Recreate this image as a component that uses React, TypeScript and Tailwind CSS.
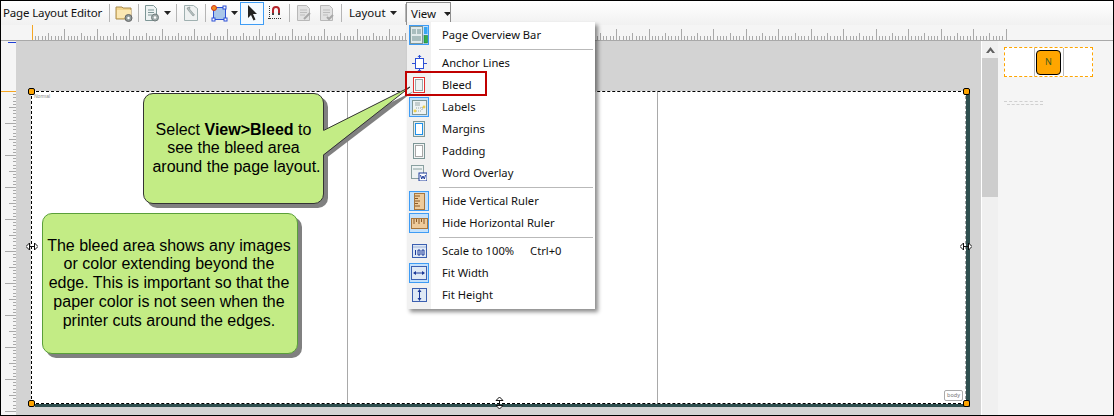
const menuFont = { fontFamily: '"Noto Sans", sans-serif' };

const Sep = ({ ml }: { ml: string }) => <div className={`w-px h-[18px] bg-[#b5b5b5] ${ml}`}></div>;

const Caret = ({ ml }: { ml: string }) => (
  <svg width="7" height="4" className={ml}>
    <path d="M0 0h7L3.5 4z" fill="#222" />
  </svg>
);

const FolderIcon = () => (
  <svg width="18" height="18" viewBox="0 0 18 18">
    <path d="M1 3h6l1 1 8 0v11H1z" fill="#f3d58c" stroke="#a88a4c" />
    <path d="M2 6h14v8H2z" fill="#fbe7b2" />
    <circle cx="13.500" cy="14" r="3.500" fill="#8f9a9a" stroke="#666" />
    <circle cx="13.500" cy="14" r="1.200" fill="#fff" />
  </svg>
);

const DocGearIcon = () => (
  <svg width="16" height="18" viewBox="0 0 16 18">
    <path d="M1.5 1.5h8l3 3v12h-11z" fill="#eef3f3" stroke="#7d9696" />
    <path d="M4 6h6M4 8.500h6M4 11h4" stroke="#7d9696" />
    <circle cx="11" cy="13.500" r="3.500" fill="#a3adad" stroke="#6f7b7b" />
    <circle cx="11" cy="13.500" r="1.200" fill="#fff" />
  </svg>
);

const WrenchDocIcon = () => (
  <svg width="14" height="18" viewBox="0 0 14 18">
    <path d="M.5 1.500h9l4 3v12H.5z" fill="#eef1f1" stroke="#9fb0b0" />
    <path d="M4 6l5 6 1.500-1L5.500 5l.5-2-3 1z" fill="#b5c0c0" stroke="#7f8c8c" strokeWidth=".6" />
  </svg>
);

const ShapeIcon = () => (
  <svg width="17" height="17" viewBox="0 0 17 17">
    <rect x="2.500" y="2.500" width="12" height="12" fill="#a9c6e8" stroke="#2b4fd6" />
    <rect x="12" y="1" width="3" height="3" fill="#fff" stroke="#2b4fd6" />
    <rect x="1" y="13" width="3" height="3" fill="#fff" stroke="#2b4fd6" />
    <rect x="13" y="13" width="3" height="3" fill="#fff" stroke="#2b4fd6" />
    <circle cx="3" cy="3" r="2.500" fill="#f28c1e" stroke="#c9341c" />
  </svg>
);

const ArrowIcon = () => (
  <svg width="10" height="16" viewBox="0 0 10 16">
    <path d="M1 0v13l3-3 2.500 5.500 2-1L6 9h4z" fill="#222" />
  </svg>
);

const MagnetIcon = () => (
  <svg width="14" height="16" viewBox="0 0 14 16">
    <path d="M5 9V5a3 3 0 0 1 6 0v4" fill="none" stroke="#b5242a" strokeWidth="2" />
    <path d="M4 8h2v2H4zM10 8h2v2h-2z" fill="#444" />
    <path d="M0 13.500h14" stroke="#333" strokeDasharray="1 1" />
    <path d="M1.500 1v13" stroke="#333" strokeDasharray="1 1" />
  </svg>
);

const FadedDoc = ({ mark }: { mark: string }) => (
  <svg width="15" height="17" viewBox="0 0 15 17">
    <path d="M.5 .5h9l3 3v12H.5z" fill="#e2e2e2" stroke="#b8b8b8" />
    <path d="M3 5h7M3 7.500h7M3 10h5" stroke="#bdbdbd" />
    <path d={mark} fill="none" stroke="#a8a8a8" strokeWidth="2" />
  </svg>
);

const Checked = ({ children }: { children: React.ReactNode }) => (
  <div className="w-5 h-5 flex items-center justify-center bg-[#c4e1fb] border border-[#3e9cf5]">{children}</div>
);

const icons: Record<string, React.ReactNode> = {
  overview: (
    <Checked>
      <svg width="18" height="18" viewBox="0 0 18 18">
        <rect x=".5" y=".5" width="12" height="17" fill="#e2eaea" stroke="#7d9696" />
        <path d="M2 3h4v5H2zM7 3h4v5H7zM2 10h9v5H2z" fill="#a9bdbd" />
        <rect x="14" y="1" width="3.500" height="7" fill="#36a6f2" />
        <rect x="14" y="9.500" width="3.500" height="7.500" fill="#2fb24a" stroke="#1c6a2d" strokeWidth=".5" />
      </svg>
    </Checked>
  ),
  anchor: (
    <svg width="15" height="17" viewBox="0 0 15 17">
      <rect x="3.500" y="3.500" width="8" height="10" fill="#fff" stroke="#2b4fd6" />
      <path d="M7.500 0v3M7.500 14v3M0 8.500h3M12 8.500h3" stroke="#2b4fd6" />
      <path d="M5.500 2h4L7.500 0zM5.500 15h4l-2 2z" fill="#2b4fd6" />
    </svg>
  ),
  bleed: (
    <svg width="12" height="16" viewBox="0 0 12 16">
      <rect x=".5" y=".5" width="11" height="15" fill="#fff" stroke="#e23030" />
      <rect x="2.500" y="2.500" width="7" height="11" fill="#eef2f2" stroke="#9aa8a8" />
    </svg>
  ),
  labels: (
    <Checked>
      <svg width="15" height="15" viewBox="0 0 15 15">
        <rect x=".5" y=".5" width="14" height="14" fill="#eef3f3" stroke="#7d9696" />
        <path d="M3 3h5M3 5h5" stroke="#9aa8a8" />
        <path d="M2 11h8M10 7v4M4 8h8" stroke="#9aa8a8" strokeDasharray="1 1" />
        <circle cx="3" cy="11" r="1.400" fill="#f0d24a" />
        <circle cx="12" cy="7" r="1.400" fill="#f0d24a" />
      </svg>
    </Checked>
  ),
  margins: (
    <svg width="12" height="16" viewBox="0 0 12 16">
      <rect x=".5" y=".5" width="11" height="15" fill="#e4ecec" stroke="#7d9696" />
      <rect x="2.500" y="2.500" width="7" height="11" fill="#fff" stroke="#1e90e8" />
    </svg>
  ),
  padding: (
    <svg width="12" height="16" viewBox="0 0 12 16">
      <rect x=".5" y=".5" width="11" height="15" fill="#f2f5f5" stroke="#7d9696" />
      <rect x="2.500" y="2.500" width="7" height="11" fill="#fff" stroke="#555" strokeDasharray="1 1" />
    </svg>
  ),
  word: (
    <svg width="16" height="16" viewBox="0 0 16 16">
      <rect x=".5" y=".5" width="12" height="13" fill="#eef3f3" stroke="#8aa0a0" />
      <path d="M2 4h9" stroke="#8aa0a0" />
      <rect x="8" y="8" width="8" height="8" fill="#fff" stroke="#1c3a9a" />
      <path d="M9.500 10l1.200 4 1.300-3 1.300 3 1.200-4" fill="none" stroke="#1c3a9a" />
    </svg>
  ),
  vruler: (
    <Checked>
      <svg width="11" height="17" viewBox="0 0 11 17">
        <rect x=".5" y=".5" width="10" height="16" fill="#eecb9b" stroke="#a8763c" />
        <path d="M1 3h5M1 5.500h3M1 8h5M1 10.500h3M1 13h5" stroke="#8a5a28" />
      </svg>
    </Checked>
  ),
  hruler: (
    <Checked>
      <svg width="17" height="11" viewBox="0 0 17 11">
        <rect x=".5" y=".5" width="16" height="10" fill="#eecb9b" stroke="#a8763c" />
        <path d="M3 1v5M5.500 1v3M8 1v5M10.500 1v3M13 1v5" stroke="#8a5a28" />
      </svg>
    </Checked>
  ),
  scale: (
    <svg width="15" height="14" viewBox="0 0 15 14">
      <rect x=".5" y=".5" width="14" height="13" fill="#dfe9f5" stroke="#3b5fb0" />
      <path d="M1 3h13" stroke="#9fb2d8" />
      <path d="M3.500 6v5M6 6h2v5H6zM10 6h2v5h-2z" fill="none" stroke="#1c3a9a" />
    </svg>
  ),
  fitw: (
    <Checked>
      <svg width="16" height="14" viewBox="0 0 16 14">
        <rect x=".5" y=".5" width="15" height="13" fill="#dfe9f5" stroke="#3b5fb0" />
        <path d="M3 7h10" stroke="#1c3a9a" />
        <path d="M5 5v4L2 7zM11 5v4l3-2z" fill="#1c3a9a" />
      </svg>
    </Checked>
  ),
  fith: (
    <svg width="15" height="14" viewBox="0 0 15 14">
      <rect x=".5" y=".5" width="14" height="13" fill="#dfe9f5" stroke="#3b5fb0" />
      <path d="M7.500 3v8" stroke="#1c3a9a" />
      <path d="M5.500 4h4l-2-3zM5.500 10h4l-2 3z" fill="#1c3a9a" />
    </svg>
  ),
};

const MenuItem = ({ icon, label, shortcut }: { icon: string; label: string; shortcut?: string }) => (
  <div className="flex items-center h-[22px]">
    <div className="w-6 h-[22px] flex items-center justify-center shrink-0">{icons[icon]}</div>
    <span className="ml-[11px] whitespace-pre">{label}</span>
    {shortcut && <span className="ml-[16px]">{shortcut}</span>}
  </div>
);

const MenuSep = () => (
  <div className="h-[6px] flex items-center pl-8 pr-[2px]">
    <div className="w-full h-px bg-[#b9b9b9]"></div>
  </div>
);

const HRuler = () => {
  const ticks = [];
  for (let i = 0; i <= 300; i++) {
    const x = Math.round(31 + i * 3.245) + 0.5;
    if (x > 1113) break;
    const top = i % 10 === 0 ? 4 : i % 5 === 0 ? 8 : 11;
    ticks.push(<line key={i} x1={x} x2={x} y1={top} y2={15} stroke="#a9a9a9" />);
  }
  return (
    <svg width="1112" height="15" className="block">
      {ticks}
      <line x1="31.500" x2="31.500" y1="0" y2="15" stroke="#f5a623" />
    </svg>
  );
};

const VRuler = () => {
  const ticks = [];
  for (let i = 0; i <= 100; i++) {
    const y = Math.round(50 + i * 3.2) + 0.5;
    if (y > 374) break;
    const left = i % 10 === 0 ? 4 : i % 5 === 0 ? 8 : 12;
    ticks.push(<line key={i} y1={y} y2={y} x1={left} x2={15} stroke="#a9a9a9" />);
  }
  return (
    <svg width="15" height="374" className="block">
      {ticks}
      <line x1="7" x2="15" y1="1.500" y2="1.500" stroke="#1e3fd6" />
      <line x1="0" x2="15" y1="50.500" y2="50.500" stroke="#f5a623" />
    </svg>
  );
};

const Handle = ({ className }: { className: string }) => (
  <div className={`absolute w-[7px] h-[7px] rounded-[2px] bg-[#ffa500] border border-black ${className}`}></div>
);

const App = () => {
  return (
    <div className="w-[1114px] h-[416px] relative flex flex-col overflow-hidden border border-black bg-white text-[#111] text-[11.2px]" style={menuFont}>
      {/* toolbar */}
      <div className="h-6 flex items-center shrink-0 pl-[2px] bg-gradient-to-b from-white to-[#f1f1f1]">
        <span className="w-[100px] text-[11.5px] tracking-[-0.15px] whitespace-nowrap">Page Layout Editor</span>
        <Sep ml="ml-[6px]" />
        <div className="ml-[5px]"><FolderIcon /></div>
        <Sep ml="ml-[5px]" />
        <div className="ml-[5px]"><DocGearIcon /></div>
        <Caret ml="ml-[4px]" />
        <Sep ml="ml-[5px]" />
        <div className="ml-[7px]"><WrenchDocIcon /></div>
        <Sep ml="ml-[7px]" />
        <div className="ml-[5px]"><ShapeIcon /></div>
        <Caret ml="ml-[3px]" />
        <div className="ml-[2px] w-[24px] h-[23px] flex items-center justify-center bg-[#f4faff] border border-[#3e9cf5]"><ArrowIcon /></div>
        <div className="ml-[4px]"><MagnetIcon /></div>
        <Sep ml="ml-[7px]" />
        <div className="ml-[7px]"><FadedDoc mark="M7 14l6-6" /></div>
        <div className="ml-[8px]"><FadedDoc mark="M7 12l2 2 4-4" /></div>
        <Sep ml="ml-[6px]" />
        <span className="ml-[7px] w-9 text-[11.5px]">Layout</span>
        <Caret ml="ml-[5px]" />
        <Sep ml="ml-[8px]" />
        <div className="ml-0 w-[45px] h-[23px] flex items-center pl-1 text-[11.5px] border border-b-0 border-[#8e8e8e] bg-[#f8f8f8]">
          View
          <Caret ml="ml-[8px]" />
        </div>
      </div>

      {/* top ruler */}
      <div className="h-4 shrink-0 bg-[#f5f5f5] border-b border-[#a9a9a9]">
        <HRuler />
      </div>

      <div className="flex flex-1 min-h-0">
        {/* left ruler */}
        <div className="w-[15px] shrink-0 bg-[#f5f5f5]">
          <VRuler />
        </div>

        {/* canvas */}
        <div className="w-[966px] shrink-0 bg-[#d3d3d3] pt-[50px] pl-[15px] border-r border-white">
          <div className="relative w-[935px] h-[313px] grid grid-cols-[316px_310px_1fr] bg-white border-t border-l border-b border-r border-dashed border-t-black border-l-black border-b-black border-r-[#a0a0a0] shadow-[4px_3px_0_#2f4f4f]">
            <div className="border-r border-[#a9a9a9]">
              <div className="text-[5px] text-[#888] pl-[2px] leading-[8px]" style={{ fontFamily: '"Liberation Sans", sans-serif' }}>Normal</div>
            </div>
            <div className="border-r border-[#a9a9a9]"></div>
            <div></div>

            <div className="absolute right-[2px] bottom-[2px] w-[19px] h-[11px] flex items-center justify-center bg-white border border-[#aaa] rounded-[2px] text-[5.500px] text-[#777]">body</div>

            <Handle className="-left-[4px] -top-[4px]" />
            <Handle className="-right-[5px] -top-[4px]" />
            <Handle className="-left-[4px] -bottom-[4px]" />
            <Handle className="-right-[5px] -bottom-[4px]" />

            <svg width="12" height="9" viewBox="0 0 12 9" className="absolute -left-[6px] top-[150px]">
              <path d="M0 4.500L3.500 1v7zM12 4.500L8.500 1v7z" fill="#fff" stroke="#111" />
              <path d="M3 4.500h6" stroke="#111" />
            </svg>
            <svg width="12" height="9" viewBox="0 0 12 9" className="absolute -right-[7px] top-[150px]">
              <path d="M0 4.500L3.500 1v7zM12 4.500L8.500 1v7z" fill="#fff" stroke="#111" />
              <path d="M3 4.500h6" stroke="#111" />
            </svg>
            <svg width="9" height="12" viewBox="0 0 9 12" className="absolute left-[463px] -bottom-[6px]">
              <path d="M4.500 0L8 3.500H1zM4.500 12L8 8.500H1z" fill="#fff" stroke="#111" />
              <path d="M4.500 3v6" stroke="#111" />
            </svg>
          </div>
        </div>

        {/* scrollbar */}
        <div className="w-4 shrink-0 bg-[#f0f0f0]">
          <div className="h-[17px] flex items-center justify-center">
            <svg width="9" height="6" viewBox="0 0 9 6">
              <path d="M0 6l4.500-6L9 6 6.500 6 4.500 3.500 2.500 6z" fill="#606060" />
            </svg>
          </div>
          <div className="h-[139px] bg-[#cdcdcd]"></div>
        </div>

        {/* right panel */}
        <div className="flex-1 bg-[#f5f5f5] pl-[6px] pt-[6px]">
          <div className="w-[89px] h-[30px] flex bg-white border border-dashed border-[#ffa500]">
            <div className="w-[30px] border-r border-[#b8b8b8]"></div>
            <div className="w-[29px] border-r border-[#b8b8b8] flex items-center pl-px">
              <div className="w-[25px] h-[25px] flex items-center justify-center rounded-[4px] bg-[#ffa500] border border-black text-[9px] text-[#3c5a1e]">N</div>
            </div>
          </div>
          <div className="mt-6 w-[39px] h-[5px] border-t border-dashed border-[#d0d0d0]">
            <div className="ml-[3px] mt-[2px] border-t border-dashed border-[#d0d0d0]"></div>
          </div>
        </div>
      </div>

      {/* callouts */}
      <div
        className="absolute left-[142px] top-[92px] w-[181px] h-[111px] flex items-center justify-center text-center rounded-[10px] bg-[#c3ec85] border border-[#333] shadow-[4px_4px_0_#808080] text-[16px] leading-[18.500px] text-black"
        style={{ fontFamily: '"Liberation Sans", sans-serif' }}
      >
        <p>Select <b>View&gt;Bleed</b> to<br />see the bleed area<br /><span className="inline-block pl-[6px]">around the page layout.</span></p>
      </div>
      <div
        className="absolute left-[41px] top-[212px] w-[256px] h-[141px] flex items-center justify-center text-center pr-[2px] rounded-[10px] bg-[#c3ec85] border border-[#5a9f3a] shadow-[4px_4px_0_#808080] text-[16px] leading-[18.700px] text-black"
        style={{ fontFamily: '"Liberation Sans", sans-serif' }}
      >
        <p>The bleed area shows any images<br />or color extending beyond the<br />edge. This is important so that the<br />paper color is not seen when the<br />printer cuts around the edges.</p>
      </div>

      {/* view menu */}
      <div className="absolute left-[406px] top-[21px] w-[188px] h-[287px] pt-[2px] bg-white shadow-[3px_3px_4px_rgba(0,0,0,0.45)] bg-gradient-to-r from-[#f1f1f1] from-[24px] to-white to-[24px] text-[#111]">
        <MenuItem icon="overview" label="Page Overview Bar" />
        <MenuSep />
        <MenuItem icon="anchor" label="Anchor Lines" />
        <MenuItem icon="bleed" label="Bleed" />
        <MenuItem icon="labels" label="Labels" />
        <MenuItem icon="margins" label="Margins" />
        <MenuItem icon="padding" label="Padding" />
        <MenuItem icon="word" label="Word Overlay" />
        <MenuSep />
        <MenuItem icon="vruler" label="Hide Vertical Ruler" />
        <MenuItem icon="hruler" label="Hide Horizontal Ruler" />
        <MenuSep />
        <MenuItem icon="scale" label="Scale to 100%" shortcut="Ctrl+0" />
        <MenuItem icon="fitw" label="Fit Width" />
        <MenuItem icon="fith" label="Fit Height" />
      </div>

      {/* callout pointer, sits over the menu edge */}
      <svg width="100" height="80" viewBox="0 0 100 80" className="absolute left-[320px] top-[84px]">
        <path d="M4 50L93 6 4 74z" fill="#808080" />
        <path d="M2 45.500L89 2 2 70z" fill="#c3ec85" />
        <path d="M2.500 45.500L89 2 2.500 70" fill="none" stroke="#333" />
      </svg>

      {/* red highlight */}
      <div className="absolute left-[404px] top-[70px] w-[82px] h-[25px] border-2 border-[#c00000]"></div>
    </div>
  );
};

export default App;
